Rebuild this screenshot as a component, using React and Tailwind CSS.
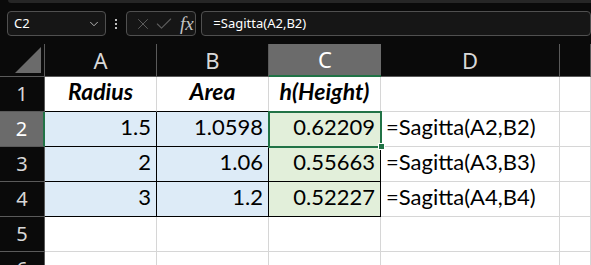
import React from "react";
import { ChevronDown, X, Check } from "lucide-react";

const COLS = ["A", "B", "C", "D", ""];

const rows = [
  { n: 1, a: "Radius", b: "Area", c: "h(Height)", d: "", head: true },
  { n: 2, a: "1.5", b: "1.0598", c: "0.62209", d: "=Sagitta(A2,B2)" },
  { n: 3, a: "2", b: "1.06", c: "0.55663", d: "=Sagitta(A3,B3)" },
  { n: 4, a: "3", b: "1.2", c: "0.52227", d: "=Sagitta(A4,B4)" },
  { n: 5, a: "", b: "", c: "", d: "", empty: true },
  { n: 6, a: "", b: "", c: "", d: "", empty: true },
];

function RowHeader({ n }) {
  const active = n === 2;
  return (
    <div
      className={`h-[35px] box-border border-b border-[#5a5a5a] flex items-center justify-center text-[20px] ${
        active ? "bg-[#6b6b6b] text-white border-r-2 border-r-[#217346]" : "bg-[#0a0a0a] text-[#d8d8d8] border-r border-r-[#5a5a5a]"
      }`}
      style={{ fontFamily: '"Noto Sans", sans-serif' }}
    >
      {n}
    </div>
  );
}

function Cell({ children, kind, align = "right", bottomBlack }) {
  let cls = "h-[35px] box-border flex items-end pb-[3px] text-[22px] text-black ";
  if (kind === "blue") cls += "bg-[#ddebf7] border-r border-b border-black ";
  else if (kind === "green") cls += "bg-[#e2efda] border-r border-b border-black ";
  else cls += "bg-white border-r border-r-[#d6d6d6] " + (bottomBlack ? "border-b border-b-black " : "border-b border-b-[#d6d6d6] ");
  if (align === "right") cls += "justify-end pr-[5px]";
  else if (align === "center") cls += "justify-center";
  else cls += "justify-start pl-[5px]";
  return (
    <div className={cls} style={{ fontFamily: "Lato, sans-serif" }}>
      {children}
    </div>
  );
}

export default function App() {
  return (
    <div className="w-[591px] h-[265px] bg-[#0a0a0a] overflow-hidden relative">
      <div className="h-[3px] ml-[8px] bg-[#262626] rounded-bl-[4px]" />

      <div className="flex items-center mt-[8px] h-[25px] text-[13px] text-white" style={{ fontFamily: '"Noto Sans", sans-serif' }}>
        <div className="ml-[7px] w-[101px] h-[25px] box-border border border-[#505050] rounded-[4px] bg-[#161616] flex items-center justify-between pl-[6px] pr-[4px]">
          <span>C2</span>
          <ChevronDown size={14} strokeWidth={1.5} className="text-[#c8c8c8]" />
        </div>
        <div className="w-[21px] flex flex-col items-center gap-[2px]">
          <span className="w-[2px] h-[2px] bg-[#bdbdbd]" />
          <span className="w-[2px] h-[2px] bg-[#bdbdbd]" />
          <span className="w-[2px] h-[2px] bg-[#bdbdbd]" />
        </div>
        <div className="w-[72px] h-[25px] box-border border border-[#505050] rounded-[4px] bg-[#161616] flex items-center pl-[7px]">
          <X size={18} strokeWidth={1.3} className="text-[#5e5e5e]" />
          <Check size={20} strokeWidth={1.3} className="text-[#5e5e5e] ml-[2px]" />
          <span className="ml-[6px] italic text-[#c4c4c4] text-[19px] leading-none" style={{ fontFamily: '"Liberation Serif", serif' }}>
            fx
          </span>
        </div>
        <div className="ml-[5px] w-[400px] h-[25px] box-border border border-[#505050] rounded-[4px] bg-[#161616] flex items-center pl-[11px]">
          =Sagitta(A2,B2)
        </div>
      </div>

      <div className="mt-[8px] grid grid-cols-[45px_112px_112px_112px_179px_1fr]">
        <div className="h-[33px] box-border border-b border-[#5a5a5a] border-r border-r-[#5a5a5a] flex items-end justify-end pr-[3px] pb-[3px]">
          <svg width="26" height="26" viewBox="0 0 26 26">
            <polygon points="26,0 26,26 0,26" fill="#6b6b6b" />
          </svg>
        </div>
        {COLS.map((c, i) => (
          <div
            key={i}
            className={`h-[33px] box-border flex items-center justify-center text-[22px] ${
              c === "C"
                ? "bg-[#6b6b6b] text-white border-b-2 border-b-[#217346]"
                : "bg-[#0a0a0a] text-[#d8d8d8] border-b border-b-[#5a5a5a] border-r border-r-[#5a5a5a]"
            }`}
            style={{ fontFamily: '"Noto Sans", sans-serif' }}
          >
            {c}
          </div>
        ))}

        {rows.map((r) => (
          <React.Fragment key={r.n}>
            <RowHeader n={r.n} />
            {r.head ? (
              <>
                <Cell align="center" bottomBlack>
                  <b className="italic text-[23px]">{r.a}</b>
                </Cell>
                <Cell align="center" bottomBlack>
                  <b className="italic text-[23px]">{r.b}</b>
                </Cell>
                <Cell align="center" bottomBlack>
                  <b className="italic text-[23px]">{r.c}</b>
                </Cell>
              </>
            ) : r.empty ? (
              <>
                <Cell />
                <Cell />
                <Cell />
              </>
            ) : (
              <>
                <Cell kind="blue">{r.a}</Cell>
                <Cell kind="blue">{r.b}</Cell>
                <Cell kind="green">{r.c}</Cell>
              </>
            )}
            <Cell align="left">{r.d}</Cell>
            <Cell />
          </React.Fragment>
        ))}
      </div>

      <div className="absolute left-[268px] top-[111px] w-[114px] h-[37px] border-2 border-[#217346] pointer-events-none" />
      <div className="absolute left-[378px] top-[143px] w-[7px] h-[7px] bg-[#217346] border border-white" />
    </div>
  );
}
